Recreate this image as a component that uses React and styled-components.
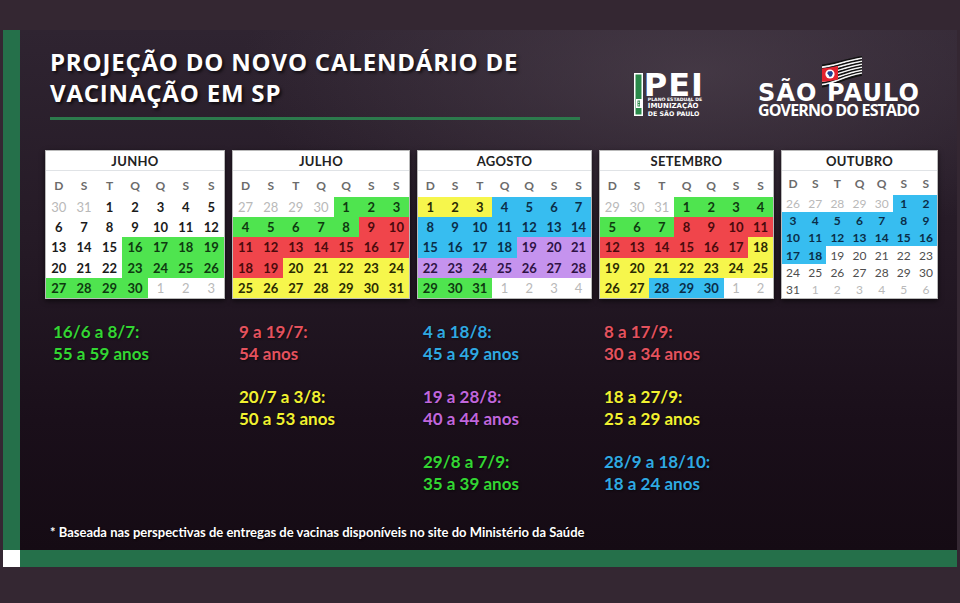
import React from 'react';
import styled, { createGlobalStyle } from 'styled-components';

const GlobalStyle = createGlobalStyle`
  html, body { margin: 0; padding: 0; background: #342732; }
  body { font-family: 'Open Sans', sans-serif; }
  #root { width: 960px; height: 603px; }
`;

const PALETTE = {
  green: { bg: '#4fe44f', fg: '#0e3a10' },
  red: { bg: '#f0454b', fg: '#4a0a0c' },
  yellow: { bg: '#f6f64c', fg: '#2a2a02' },
  blue: { bg: '#37bdf0', fg: '#0a2d48' },
  purple: { bg: '#c593ee', fg: '#2e1244' },
};

const LEGEND_COLORS = {
  green: '#33d633',
  red: '#e4525e',
  yellow: '#f1f130',
  blue: '#2fa9e2',
  purple: '#c066dc',
};

const Page = styled.div`
  width: 960px;
  height: 603px;
  box-sizing: border-box;
  padding: 30px 3px 0;
  background: #342732;
  overflow: hidden;
`;

const Slide = styled.div`
  display: grid;
  grid-template-columns: 17px 1fr;
  grid-template-rows: 520px 17px;
  height: 537px;
`;

const SideBar = styled.div`
  background: #25704a;
`;

const Corner = styled.div`
  background: #ffffff;
`;

const BottomBar = styled.div`
  background: #25704a;
`;

const Content = styled.main`
  display: flex;
  flex-direction: column;
  background:
    radial-gradient(ellipse 65% 45% at 72% 8%, rgba(86, 74, 86, 0.55), rgba(86, 74, 86, 0) 75%),
    linear-gradient(180deg, #2f2431 0%, #251a26 40%, #1a0f1a 75%, #150b14 100%);
`;

const Header = styled.header`
  display: flex;
  align-items: flex-end;
  padding: 16px 35px 0 30px;
`;

const TitleBlock = styled.div`
  width: 530px;
`;

const Title = styled.h1`
  margin: 0;
  font-family: 'Open Sans', sans-serif;
  font-weight: 700;
  font-size: 24px;
  line-height: 31px;
  letter-spacing: 0.8px;
  color: #ffffff;
  text-shadow: 2px 2px 3px rgba(0, 0, 0, 0.65);
  white-space: nowrap;
`;

const Rule = styled.div`
  margin-top: 9px;
  height: 3px;
  background: #2c7a4c;
`;

const Logos = styled.div`
  margin-left: auto;
  display: flex;
  align-items: flex-end;
  gap: 54px;
  margin-bottom: 3px;
`;

const PeiLogo = styled.div`
  display: flex;
  gap: 1px;
  align-items: flex-start;
`;

const PeiText = styled.div`
  display: flex;
  flex-direction: column;
  color: #ffffff;
  font-family: 'DejaVu Sans', sans-serif;
  font-weight: 700;
`;

const PeiMark = styled.div`
  font-size: 32px;
  line-height: 24px;
  letter-spacing: 1px;
  height: 24px;
`;

const PeiSmall = styled.div`
  font-size: ${(p) => p.$size}px;
  line-height: ${(p) => p.$lh}px;
  padding-left: 4px;
  white-space: nowrap;
`;

const SpLogo = styled.div`
  position: relative;
  width: 164px;
  display: flex;
  flex-direction: column;
  color: #ffffff;
`;

const Flag = styled.svg`
  position: absolute;
  left: 64px;
  top: 0;
`;

const SpName = styled.div`
  margin-top: 26px;
  font-family: 'DejaVu Sans', sans-serif;
  font-weight: 700;
  font-size: 24px;
  line-height: 22px;
  letter-spacing: 1.1px;
  white-space: nowrap;
  position: relative;
`;

const SpSub = styled.div`
  margin-top: -1px;
  font-family: 'Open Sans', sans-serif;
  font-weight: 700;
  font-size: 16px;
  line-height: 14px;
  letter-spacing: -0.85px;
  white-space: nowrap;
`;

const CalRow = styled.section`
  display: flex;
  gap: 7px;
  padding-left: 25px;
  margin-top: 30px;
`;

const Card = styled.div`
  width: ${(p) => p.$w}px;
  height: 149px;
  box-sizing: border-box;
  background: #ffffff;
  border: 1px solid #b9b9b9;
  box-shadow: 0 2px 5px rgba(0, 0, 0, 0.6);
  display: flex;
  flex-direction: column;
  font-family: Lato, 'Open Sans', sans-serif;
`;

const MonthName = styled.div`
  height: 19px;
  border-bottom: 1px solid #e0e3e6;
  text-align: center;
  font-weight: 700;
  font-size: 13px;
  line-height: 20px;
  color: #222222;
  letter-spacing: 0.3px;
`;

const WeekDays = styled.div`
  display: grid;
  grid-template-columns: repeat(7, 1fr);
  height: ${(p) => p.$h}px;
  padding-top: ${(p) => p.$pt}px;
  box-sizing: border-box;
  align-items: center;
  text-align: center;
  font-weight: 700;
  font-size: 12px;
  color: #6b6b6b;
`;

const Days = styled.div`
  flex: 1;
  display: grid;
  grid-template-columns: repeat(7, 1fr);
  grid-template-rows: repeat(${(p) => p.$rows}, 1fr);
`;

const Day = styled.div`
  display: flex;
  align-items: center;
  justify-content: center;
  font-size: ${(p) => p.$fs}px;
  font-weight: ${(p) => (p.$kind === 'other' || p.$kind === 'plain' ? 400 : 700)};
  background: ${(p) => (p.$color ? PALETTE[p.$color].bg : 'transparent')};
  color: ${(p) =>
    p.$color
      ? PALETTE[p.$color].fg
      : p.$kind === 'other'
      ? '#b9b9b9'
      : p.$kind === 'plain'
      ? '#4e4e4e'
      : '#1b1b1b'};
`;

const Legend = styled.section`
  display: grid;
  grid-template-columns: 186px 184px 181px 1fr;
  grid-auto-rows: 44px;
  row-gap: 21px;
  padding-left: 33px;
  margin-top: 22px;
`;

const Entry = styled.div`
  grid-column: ${(p) => p.$col};
  grid-row: ${(p) => p.$row};
  color: ${(p) => LEGEND_COLORS[p.$color]};
  font-family: Lato, 'Open Sans', sans-serif;
  font-weight: 700;
  font-size: 17px;
  line-height: 22px;
  text-shadow: 1px 1px 2px rgba(0, 0, 0, 0.5);
  white-space: nowrap;
`;

const Footnote = styled.p`
  margin: 29px 0 0;
  padding-left: 30px;
  font-family: Lato, 'Open Sans', sans-serif;
  font-weight: 700;
  font-size: 13px;
  line-height: 16px;
  color: #ffffff;
  text-shadow: 1px 1px 2px rgba(0, 0, 0, 0.8);
  white-space: nowrap;
`;

const WEEK = ['D', 'S', 'T', 'Q', 'Q', 'S', 'S'];

const MONTHS = [
  { name: 'JUNHO', w: 180, start: 2, days: 30, prev: 31, rows: 5, ranges: [[16, 19, 'green'], [23, 30, 'green']] },
  {
    name: 'JULHO', w: 178, start: 4, days: 31, prev: 30, rows: 5,
    ranges: [[1, 8, 'green'], [9, 19, 'red'], [20, 31, 'yellow']],
  },
  {
    name: 'AGOSTO', w: 175, start: 0, days: 31, prev: 31, rows: 5,
    ranges: [[1, 3, 'yellow'], [4, 18, 'blue'], [19, 28, 'purple'], [29, 31, 'green']],
  },
  {
    name: 'SETEMBRO', w: 175, start: 3, days: 30, prev: 31, rows: 5,
    ranges: [[1, 7, 'green'], [8, 17, 'red'], [18, 27, 'yellow'], [28, 30, 'blue']],
  },
  {
    name: 'OUTUBRO', w: 157, start: 5, days: 31, prev: 30, rows: 6, small: true,
    ranges: [[1, 18, 'blue']],
  },
];

function buildCells(m) {
  const cells = [];
  for (let i = 0; i < m.rows * 7; i++) {
    const d = i - m.start + 1;
    if (d < 1) cells.push({ n: m.prev + d, kind: 'other' });
    else if (d > m.days) cells.push({ n: d - m.days, kind: 'other' });
    else {
      const r = m.ranges.find(([a, b]) => d >= a && d <= b);
      cells.push({ n: d, kind: r ? 'current' : m.small ? 'plain' : 'current', color: r ? r[2] : null });
    }
  }
  return cells;
}

const LEGEND = [
  { col: 1, row: 1, color: 'green', a: '16/6 a 8/7:', b: '55 a 59 anos' },
  { col: 2, row: 1, color: 'red', a: '9 a 19/7:', b: '54 anos' },
  { col: 2, row: 2, color: 'yellow', a: '20/7 a 3/8:', b: '50 a 53 anos' },
  { col: 3, row: 1, color: 'blue', a: '4 a 18/8:', b: '45 a 49 anos' },
  { col: 3, row: 2, color: 'purple', a: '19 a 28/8:', b: '40 a 44 anos' },
  { col: 3, row: 3, color: 'green', a: '29/8 a 7/9:', b: '35 a 39 anos' },
  { col: 4, row: 1, color: 'red', a: '8 a 17/9:', b: '30 a 34 anos' },
  { col: 4, row: 2, color: 'yellow', a: '18 a 27/9:', b: '25 a 29 anos' },
  { col: 4, row: 3, color: 'blue', a: '28/9 a 18/10:', b: '18 a 24 anos' },
];

function Month({ m }) {
  const cells = buildCells(m);
  return (
    <Card $w={m.w}>
      <MonthName>{m.name}</MonthName>
      <WeekDays $h={m.small ? 24 : 26} $pt={m.small ? 1 : 3}>
        {WEEK.map((w, i) => (
          <span key={i}>{w}</span>
        ))}
      </WeekDays>
      <Days $rows={m.rows}>
        {cells.map((c, i) => (
          <Day key={i} $kind={c.kind} $color={c.color} $fs={m.small ? 12 : 13}>
            {c.n}
          </Day>
        ))}
      </Days>
    </Card>
  );
}

function SpFlag() {
  const stripes = [];
  const h = 1.75;
  for (let i = 0; i < 13; i++) {
    const y0 = 9.5 + i * h;
    const y1 = 0.9 + i * h * 0.85;
    stripes.push(
      <path
        key={i}
        d={`M0 ${y0} C 12 ${y0 - 1.2}, 22 ${y1 + 3}, 40 ${y1}`}
        stroke={i % 2 === 0 ? '#111111' : '#f4f4f4'}
        strokeWidth={h + 0.05}
        fill="none"
      />
    );
  }
  return (
    <Flag width="40" height="32" viewBox="0 0 40 32">
      {stripes}
      <path d="M0 12.5 C 5 12, 11 11.2, 16 10 L 16 23.5 C 11 24.6, 5 25.4, 0 25.8 Z" fill="#e3232f" />
      <circle cx="8" cy="18" r="4.6" fill="#ffffff" />
      <path d="M6 15.5 L9.5 15 L11 17 L9.8 20.3 L7.6 21 L6.6 19 L5.2 17.6 Z" fill="#1c3f94" />
    </Flag>
  );
}

function PeiEmblem() {
  return (
    <svg width="9" height="43" viewBox="0 0 9 43">
      <rect x="0" y="0" width="9" height="43" fill="#ffffff" />
      <rect x="1.5" y="1.5" width="6" height="40" fill="#2a8a4a" />
      <rect x="2" y="26" width="6" height="9" fill="#ffffff" />
      <path d="M3.5 27.5 H6 V33.5 H3.5 Z M4.3 28.5 V30 H5.3 V28.5 Z M4.3 31 V32.5 H5.3 V31 Z" fill="#2a8a4a" fillRule="evenodd" />
    </svg>
  );
}

export default function App() {
  return (
    <>
      <GlobalStyle />
      <Page>
        <Slide>
          <SideBar />
          <Content>
            <Header>
              <TitleBlock>
                <Title>
                  PROJEÇÃO DO NOVO CALENDÁRIO DE
                  <br />
                  VACINAÇÃO EM SP
                </Title>
                <Rule />
              </TitleBlock>
              <Logos>
                <PeiLogo>
                  <PeiEmblem />
                  <PeiText>
                    <PeiMark>PEI</PeiMark>
                    <PeiSmall $size={4.6} $lh={6}>PLANO ESTADUAL DE</PeiSmall>
                    <PeiSmall $size={7} $lh={7}>IMUNIZAÇÃO</PeiSmall>
                    <PeiSmall $size={6.3} $lh={7}>DE SÃO PAULO</PeiSmall>
                  </PeiText>
                </PeiLogo>
                <SpLogo>
                  <SpFlag />
                  <SpName>SÃO PAULO</SpName>
                  <SpSub>GOVERNO DO ESTADO</SpSub>
                </SpLogo>
              </Logos>
            </Header>
            <CalRow>
              {MONTHS.map((m) => (
                <Month key={m.name} m={m} />
              ))}
            </CalRow>
            <Legend>
              {LEGEND.map((e, i) => (
                <Entry key={i} $col={e.col} $row={e.row} $color={e.color}>
                  {e.a}
                  <br />
                  {e.b}
                </Entry>
              ))}
            </Legend>
            <Footnote>
              * Baseada nas perspectivas de entregas de vacinas disponíveis no site do Ministério da Saúde
            </Footnote>
          </Content>
          <Corner />
          <BottomBar />
        </Slide>
      </Page>
    </>
  );
}
